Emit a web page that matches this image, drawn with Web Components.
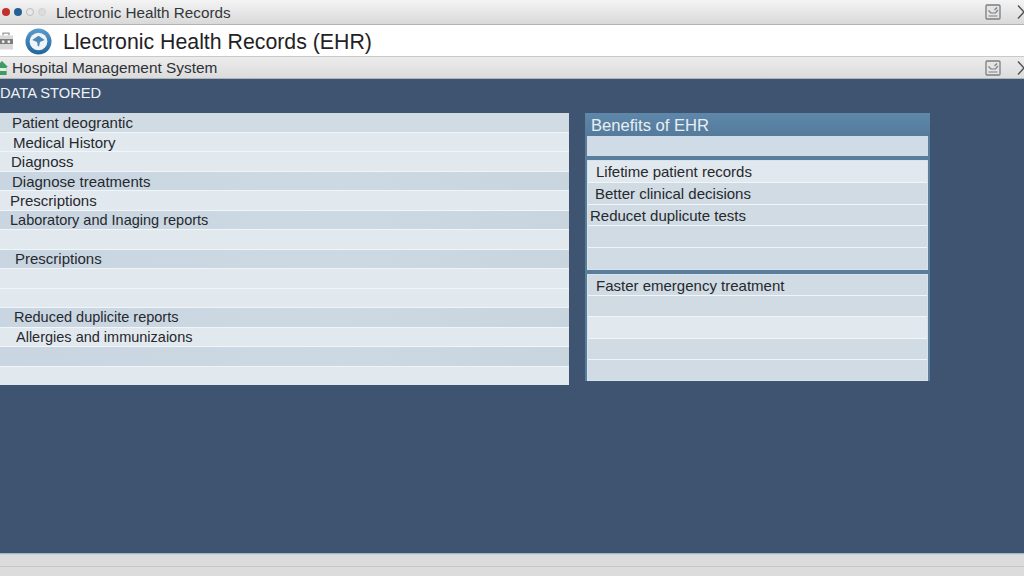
<!DOCTYPE html>
<html lang="en"><head><meta charset="utf-8"><title>EHR</title>
<style>
html,body{margin:0;padding:0;width:1024px;height:576px;overflow:hidden;background:#3f5470;font-family:"Liberation Sans",Arial,sans-serif;color:#23272c}
ehr-app{width:1024px;height:576px}
</style></head><body>
<template id="tpl-actions"><style>
:host{display:flex;align-items:center;gap:16px;margin-left:auto;margin-right:-6px}
svg{display:block}
</style>
<svg width="16" height="16" viewBox="0 0 16 16" fill="none" stroke="#7a7e82"><rect x="1" y="1" width="14" height="14" rx="1" fill="#e4e4e4" stroke-width="1.3"/><path d="M3.5 6.5 6 9h4.5L13 6M3.5 12h9M9.5 6l2.5-2.5" stroke-width="1.2"/></svg>
<svg width="13" height="16" viewBox="0 0 13 16" fill="none" stroke="#4a4e52" stroke-width="1.3"><path d="M1 1.5 7 8 1 14.5"/><path d="M13 1.5 7 8 13 14.5"/></svg>
</template>
<script>
const html=(s)=>{const t=document.createElement('template');t.innerHTML=s;return t};
function reg(name,tpl){
  const T=typeof tpl==='string'?html(tpl):tpl;
  customElements.define(name,class extends HTMLElement{
    constructor(){super();this.attachShadow({mode:'open'}).appendChild(T.content.cloneNode(true))}
  });
}
reg('win-actions',document.getElementById('tpl-actions'));
reg('title-bar',`<style>
:host{display:flex;align-items:center;box-sizing:border-box;height:25px;padding-left:2px;background:linear-gradient(#f4f4f4,#d9d9d9);border-bottom:1px solid #b3b3b3;font-size:15.25px;color:#33373b}
slot{display:block;padding-top:1px}
.dots{display:flex;align-items:center;gap:4px;width:54px}
i{display:block;width:8px;height:8px;border-radius:50%}
.r{background:#c22f2c}.b{background:#265f96}.g{background:#e8e8e8;border:1px solid #bdbdbd;box-sizing:border-box}.f{background:#dcdcdc;border:1px solid #d2d2d2;box-sizing:border-box}
</style><div class="dots"><i class="r"></i><i class="b"></i><i class="g"></i><i class="f"></i></div><slot></slot><win-actions></win-actions>`);
reg('app-header',`<style>
:host{display:flex;align-items:center;box-sizing:border-box;height:32px;background:#fff;font-size:21.3px;color:#1f2225;border-bottom:1px solid #c9c9c9}
slot{display:block;padding-top:4px}
.case{display:block;margin:1px 0 0 -1px}
.logo{display:block;margin:2px 11px 0 12px}
</style>
<svg class="case" width="14" height="18" viewBox="0 0 14 18"><path d="M4 3.5V1.2h6V3.5" fill="none" stroke="#9a9a9a" stroke-width="1.3"/><rect x="0" y="3.5" width="14" height="14" fill="#d8d8d8"/><rect x="0" y="7" width="14" height="5" fill="#7d7d7d"/><rect x="3" y="8.5" width="2.4" height="2.4" fill="#f2f2f2"/><rect x="8.6" y="8.5" width="2.4" height="2.4" fill="#f2f2f2"/></svg>
<svg class="logo" width="27" height="27" viewBox="0 0 28 28"><defs><linearGradient id="g" x1="0" y1="0" x2="0" y2="1"><stop offset="0" stop-color="#5a9ccc"/><stop offset="1" stop-color="#24649c"/></linearGradient></defs><circle cx="14" cy="14" r="13.5" fill="url(#g)"/><circle cx="14" cy="14" r="9.2" fill="#eef4f8"/><path d="M7.5 12.5 14 8l6.5 4.5-5 2-.8 4.5h-1.4l-.8-4.5z" fill="#4d87b5"/></svg>
<slot></slot>`);
reg('sub-bar',`<style>
:host{display:flex;align-items:center;box-sizing:border-box;height:22px;background:linear-gradient(#ececec,#dcdcdc);border-bottom:1px solid #aeb4ba;font-size:15.4px;color:#2e3236}
slot{display:block;padding-top:1px}
svg{display:block;margin-left:-4px;margin-right:4px}
</style>
<svg width="12" height="14" viewBox="0 0 12 14"><path d="M6 0 12 6H10.6V14H1.4V6H0z" fill="#3f9a63"/><rect x="1.4" y="7" width="9.2" height="3" fill="#dff0e6"/></svg>
<slot></slot><win-actions></win-actions>`);
reg('section-title',`<style>
:host{display:block;box-sizing:border-box;height:34px;padding:5px 0 0 0;font-size:14.7px;line-height:18px;color:#eef2f6}
</style><slot></slot>`);
reg('data-row',`<style>
:host{display:flex;align-items:center;box-sizing:border-box;flex:1 1 0;min-height:0;padding-top:1px;background:var(--bg,#e1e8ee);border-bottom:1px solid #f0f5f9;font-size:15px;white-space:nowrap;color:#26292d}
:host([shade]){--bg:linear-gradient(90deg,#c9d6e1,#ccd8e2 60%,#c8d5df)}
:host([tone]){--bg:#d0dbe4}
:host([small]){font-size:14.5px}
:host([high]){padding-top:0;padding-bottom:1px}
:host(:last-child){border-bottom:0}
</style><slot></slot>`);
reg('data-group',`<style>
:host{display:flex;flex-direction:column;box-sizing:border-box;background:#e1e8ee;border:1px solid #d5e3ee}
</style><slot></slot>`);
reg('left-panel',`<style>
:host{display:flex;flex-direction:column;box-sizing:border-box;width:569px;height:272px;flex:none}
</style><slot></slot>`);
reg('right-panel',`<style>
:host{display:flex;flex-direction:column;box-sizing:border-box;width:345px;height:268px;flex:none;background:#5a7d9c;padding:0 2px;gap:4px}
header{margin:0 -2px -4px;height:23px;box-sizing:border-box;padding:4px 0 0 6px;background:linear-gradient(#5e87a9,#557b9c);font-size:16.6px;line-height:18px;color:#e8eff5}
</style><header><slot name="head"></slot></header><slot></slot>`);
reg('ehr-app',`<style>
:host{display:flex;flex-direction:column}
main{flex:1;min-height:0;background:#3f5470;display:flex;flex-direction:column}
.cols{display:flex;gap:16px;align-items:flex-start}
footer{height:23px;box-sizing:border-box;flex:none;background:#dcdcdc;border-top:1px solid #a9b6c2;box-shadow:inset 0 1px 0 #ccd4dc}
footer div{height:12px;border-bottom:1px solid #c6c6c6}
</style>
<slot name="top"></slot>
<main><slot name="title"></slot><div class="cols"><slot name="left"></slot><slot name="right"></slot></div></main>
<footer><div></div></footer>`);
</script>
<ehr-app>
<title-bar slot="top">Llectronic Health Records</title-bar>
<app-header slot="top">Llectronic Health Records (EHR)</app-header>
<sub-bar slot="top">Hospital Management System</sub-bar>
<section-title slot="title">DATA STORED</section-title>
<left-panel slot="left">
<data-row tone style="padding-left:12px">Patient deograntic</data-row>
<data-row style="padding-left:13px">Medical History</data-row>
<data-row style="padding-left:11px">Diagnoss</data-row>
<data-row shade style="padding-left:12px">Diagnose treatments</data-row>
<data-row style="padding-left:10px">Prescriptions</data-row>
<data-row shade small style="padding-left:10px">Laboratory and Inaging reports</data-row>
<data-row></data-row>
<data-row shade high style="padding-left:15px">Prescriptions</data-row>
<data-row></data-row>
<data-row></data-row>
<data-row shade small high style="padding-left:14px">Reduced duplicite reports</data-row>
<data-row small style="padding-left:16px">Allergies and immunizaions</data-row>
<data-row shade></data-row>
<data-row></data-row>
</left-panel>
<right-panel slot="right">
<span slot="head">Benefits of EHR</span>
<data-group style="flex:none;height:20px;background:#cfdbe6;border:0"></data-group>
<data-group style="flex:none;height:110px">
<data-row style="padding-left:8px">Lifetime patient records</data-row>
<data-row tone style="padding-left:7px">Better clinical decisions</data-row>
<data-row tone style="padding-left:2px">Reducet duplicute tests</data-row>
<data-row tone></data-row>
<data-row tone></data-row>
</data-group>
<data-group style="flex:none;height:107px">
<data-row tone style="padding-left:8px">Faster emergency treatment</data-row>
<data-row tone></data-row>
<data-row></data-row>
<data-row tone></data-row>
<data-row tone></data-row>
</data-group>
</right-panel>
</ehr-app>
</body></html>
